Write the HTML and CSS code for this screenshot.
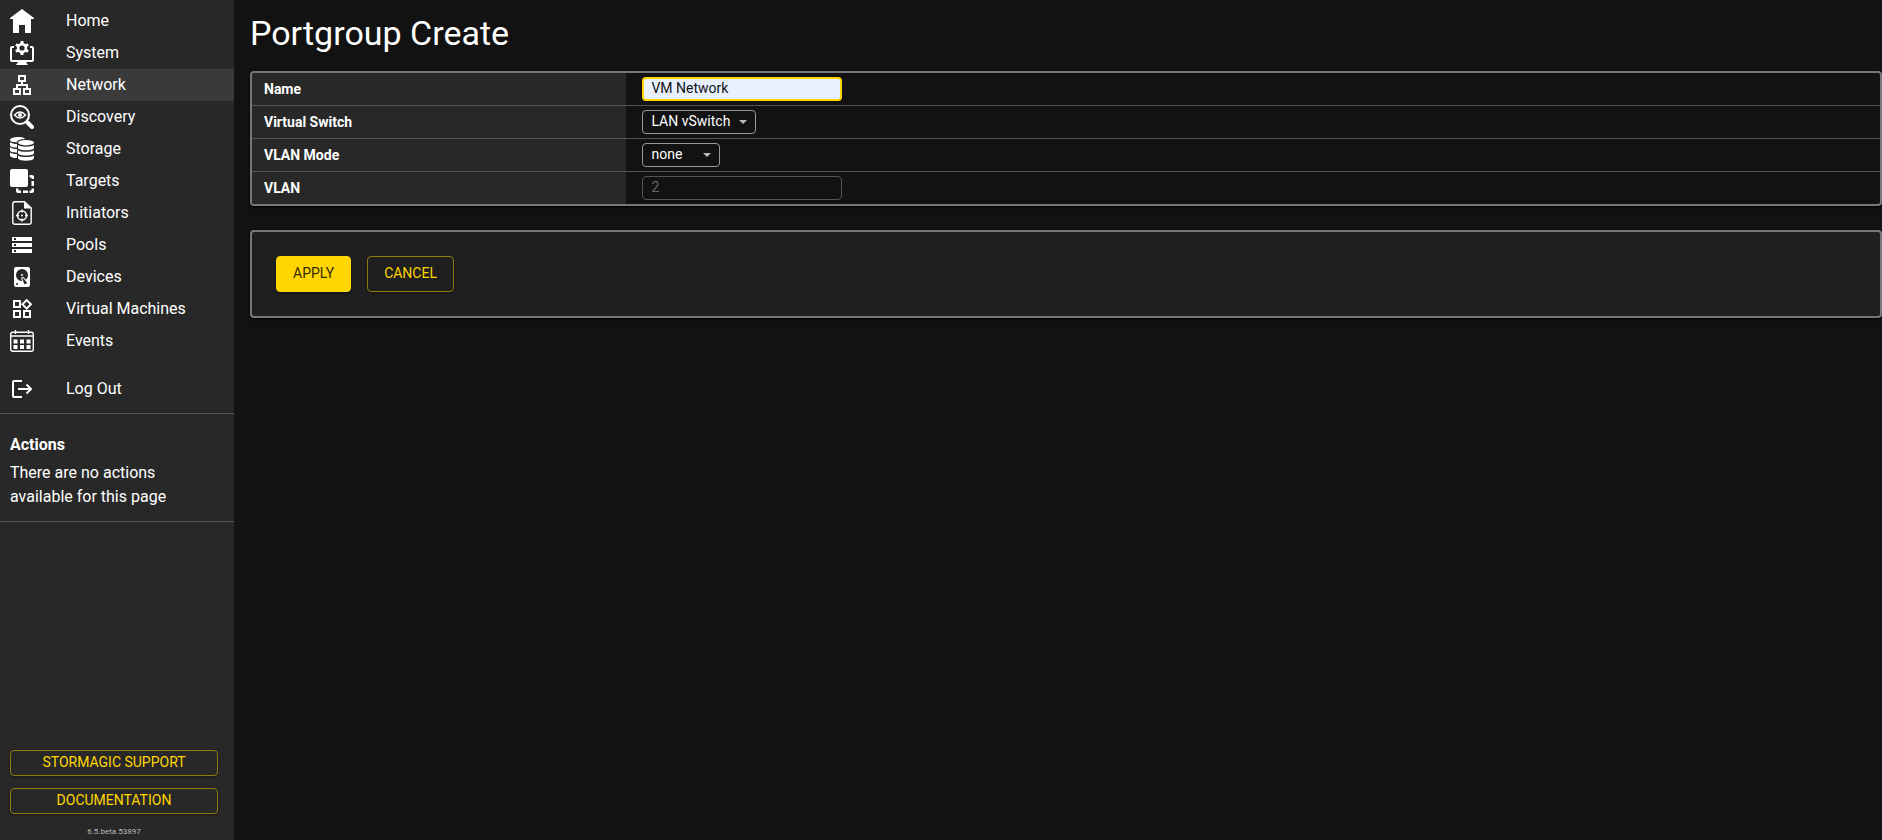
FILE: index.html
```
<!DOCTYPE html>
<html lang="en">
<head>
  <meta charset="utf-8">
  <title>Portgroup Create</title>
  <link rel="stylesheet" href="styles.css">
</head>
<body>
  <div class="sidebar">
    <nav class="menu">
      <a class="menu-item" href="#">
        <svg class="icon" viewBox="0 0 24 24"><path d="M12 0L24 9V10H21V24H15V16H9V24H3V10H0V9Z"/></svg>
        <span>Home</span>
      </a>
      <a class="menu-item" href="#">
        <svg class="icon" viewBox="0 0 24 24">
          <path class="line" d="M4 6H2Q1 6 1 7V19Q1 20 2 20H22Q23 20 23 19V7Q23 6 22 6H20"/>
          <path d="M8 21H16L18 24H6Z"/>
          <circle class="gear" cx="12" cy="7" r="3.9"/>
          <path class="teeth" d="M12 0V3M12 11V14M5.9 3.5L8.5 5M15.5 9L18.1 10.5M5.9 10.5L8.5 9M15.5 5L18.1 3.5"/>
        </svg>
        <span>System</span>
      </a>
      <a class="menu-item active" href="#">
        <svg class="icon" viewBox="0 0 24 24">
          <path class="line" d="M9 3H15V8H9ZM4 16H10V21H4ZM14 16H20V21H14ZM12 8V12M7 16V12H17V16"/>
        </svg>
        <span>Network</span>
      </a>
      <a class="menu-item" href="#">
        <svg class="icon" viewBox="0 0 24 24">
          <circle class="line" cx="10" cy="10" r="9"/>
          <path class="handle" d="M17.5 17.5L22 22"/>
          <path class="thin" d="M4.5 10Q10 4 15.5 10Q10 16 4.5 10Z"/>
          <circle cx="10" cy="10" r="2"/>
        </svg>
        <span>Discovery</span>
      </a>
      <a class="menu-item" href="#">
        <svg class="icon" viewBox="0 0 24 24">
          <path d="M0 3C0 -0.6 14 -0.8 15 2C10 2.2 7 3.5 7 5.4C3 5.4 0 4.6 0 3Z"/>
          <path d="M0 5.2C2 6.6 4.5 6.9 7 6.9V10.6C3 10.6 0 9.6 0 8.2ZM0 10.3C2 11.7 4.5 12 7 12V15.7C3 15.7 0 14.7 0 13.3ZM0 15.4C2 16.8 4.5 17.1 7 17.1V21C3 21 0 19.8 0 18.4Z"/>
          <ellipse cx="16" cy="5.7" rx="8" ry="2.7"/>
          <path d="M8 8C11 10.2 21 10.2 24 8V11.3C22 14 10 14 8 11.3ZM8 13.2C11 15.3 21 15.3 24 13.2V16.5C22 19.2 10 19.2 8 16.5ZM8 18.4C11 20.5 21 20.5 24 18.4V21.5C22 24.5 10 24.5 8 21.5Z"/>
        </svg>
        <span>Storage</span>
      </a>
      <a class="menu-item" href="#">
        <svg class="icon" viewBox="0 0 24 24">
          <rect width="18" height="18" rx="2"/>
          <path d="M19.5 6H22Q24 6 24 8V10H21.5V8.5H19.5ZM21.5 12H24V17H21.5ZM21.5 19.5H24V22Q24 24 22 24H19.5V21.5H21.5ZM13 21.5H18V24H13ZM6 19.5H8.5V21.5H11V24H8Q6 24 6 22Z"/>
        </svg>
        <span>Targets</span>
      </a>
      <a class="menu-item" href="#">
        <svg class="icon" viewBox="0 0 24 24">
          <path class="thin" d="M5 0.8H14.5L21.2 7V21Q21.2 23.2 19 23.2H5Q2.8 23.2 2.8 21V3Q2.8 0.8 5 0.8Z"/>
          <path d="M14 1V7.5H21Z"/>
          <circle class="thin" cx="12" cy="14.5" r="4.5"/>
          <circle cx="12" cy="14.5" r="1"/>
          <path class="thin" d="M12 8.5V11.5M12 17.5V20.5M6 14.5H9M15 14.5H18"/>
        </svg>
        <span>Initiators</span>
      </a>
      <a class="menu-item" href="#">
        <svg class="icon" viewBox="0 0 24 24"><path d="M2 20h20v-4H2v4zm2-3h2v2H4v-2zM2 4v4h20V4H2zm4 3H4V5h2v2zm-4 7h20v-4H2v4zm2-3h2v2H4v-2z"/></svg>
        <span>Pools</span>
      </a>
      <a class="menu-item" href="#">
        <svg class="icon" viewBox="0 0 24 24"><path d="M6 2H18A2 2 0 0 1 20 4V20A2 2 0 0 1 18 22H6A2 2 0 0 1 4 20V4A2 2 0 0 1 6 2M12 4A6 6 0 0 0 6 10C6 13.31 8.69 16 12.1 16L11.22 13.77C10.95 13.29 11.11 12.68 11.59 12.4L12.45 11.9C12.93 11.63 13.54 11.79 13.82 12.27L15.74 14.69C17.12 13.59 18 11.9 18 10A6 6 0 0 0 12 4M12 9A1 1 0 0 1 13 10A1 1 0 0 1 12 11A1 1 0 0 1 11 10A1 1 0 0 1 12 9M7 18A1 1 0 0 0 6 19A1 1 0 0 0 7 20A1 1 0 0 0 8 19A1 1 0 0 0 7 18M12.09 13.27L14.58 19.58L17.17 18.08L12.95 12.77Z"/></svg>
        <span>Devices</span>
      </a>
      <a class="menu-item" href="#">
        <svg class="icon" viewBox="0 0 24 24"><path d="M16.66 4.52l2.83 2.83-2.83 2.83-2.83-2.83 2.83-2.83M9 5v4H5V5h4m10 10v4h-4v-4h4M9 15v4H5v-4h4m7.66-13.31L11 7.34 16.66 13l5.66-5.66-5.66-5.65zM11 3H3v8h8V3zm10 10h-8v8h8v-8zm-10 0H3v8h8v-8z"/></svg>
        <span>Virtual Machines</span>
      </a>
      <a class="menu-item" href="#">
        <svg class="icon" viewBox="0 0 24 24">
          <rect class="thin" x="0.7" y="3.2" width="22.6" height="19.1" rx="2"/>
          <path class="thin" d="M1 7H23M5.5 1V5M18.5 1V5"/>
          <path d="M3.5 10.5H7.5V14.5H3.5ZM10 10.5H14V14.5H10ZM16.5 10.5H20.5V14.5H16.5ZM3.5 16H7.5V20H3.5ZM10 16H14V20H10ZM16.5 16H20.5V20H16.5Z"/>
        </svg>
        <span>Events</span>
      </a>
      <a class="menu-item logout" href="#">
        <svg class="icon" viewBox="0 0 24 24"><path class="line" d="M12 4H4Q3 4 3 5V19Q3 20 4 20H12M8 12H21M16.5 7.5L21 12L16.5 16.5"/></svg>
        <span>Log Out</span>
      </a>
    </nav>

    <div class="actions">
      <h2>Actions</h2>
      <p>There are no actions available for this page</p>
    </div>

    <div class="sidebar-footer">
      <button class="btn btn-small" type="button">STORMAGIC SUPPORT</button>
      <button class="btn btn-small" type="button">DOCUMENTATION</button>
      <p class="version">6.5.beta.53897</p>
    </div>
  </div>

  <main class="content">
    <h1>Portgroup Create</h1>
    <form>
      <table class="settings">
        <tr>
          <th><label for="name">Name</label></th>
          <td><input class="field name-field" id="name" type="text" value="VM Network"></td>
        </tr>
        <tr>
          <th><label for="vswitch">Virtual Switch</label></th>
          <td>
            <select class="field select-switch" id="vswitch">
              <option>LAN vSwitch</option>
            </select>
          </td>
        </tr>
        <tr>
          <th><label for="vlanmode">VLAN Mode</label></th>
          <td>
            <select class="field select-mode" id="vlanmode">
              <option>none</option>
            </select>
          </td>
        </tr>
        <tr>
          <th><label for="vlan">VLAN</label></th>
          <td><input class="field" id="vlan" type="text" value="2" disabled></td>
        </tr>
      </table>

      <div class="buttons">
        <button class="btn btn-primary" type="button">APPLY</button>
        <button class="btn" type="button">CANCEL</button>
      </div>
    </form>
  </main>
</body>
</html>
```

FILE: styles.css
```
* {
  box-sizing: border-box;
}

body {
  display: flex;
  min-height: 100vh;
  margin: 0;
  background-color: #121212;
  color: #fff;
  font-family: Roboto, sans-serif;
  font-size: 16px;
  line-height: 24px;
}

.sidebar {
  display: flex;
  flex-direction: column;
  flex-shrink: 0;
  width: 234px;
  background-color: #282828;
}

.menu {
  padding: 5px 0 8px;
  border-bottom: 1px solid #555;
}

.menu-item {
  display: flex;
  align-items: center;
  gap: 32px;
  height: 32px;
  padding: 0 10px;
  color: #fff;
  text-decoration: none;
}

.menu-item:hover,
.menu-item.active {
  background-color: #3a3a3a;
}

.logout {
  margin-top: 16px;
}

.icon {
  width: 24px;
  height: 24px;
  fill: #fff;
}

.icon .line,
.icon .thin,
.icon .gear,
.icon .teeth,
.icon .handle {
  fill: none;
  stroke: #fff;
  stroke-width: 2;
}

.icon .thin {
  stroke-width: 1.4;
}

.icon .gear {
  stroke-width: 2.6;
}

.icon .teeth {
  stroke-width: 3;
}

.icon .handle {
  stroke-width: 4;
  stroke-linecap: round;
}

.actions {
  padding: 19px 40px 12px 10px;
  border-bottom: 1px solid #555;
}

.actions h2 {
  margin: 0 0 4px;
  font-size: 16px;
  font-weight: bold;
  line-height: 24px;
}

.actions p {
  margin: 0;
}

.sidebar-footer {
  display: flex;
  flex-direction: column;
  gap: 12px;
  margin-top: auto;
  padding: 0 16px 2px 10px;
}

.version {
  margin: 0;
  color: #bbb;
  font-size: 8px;
  line-height: 12px;
  text-align: center;
}

.content {
  flex-grow: 1;
  padding-left: 16px;
}

h1 {
  margin: 13px 0 18px;
  font-size: 34px;
  font-weight: 400;
  line-height: 40px;
}

.settings,
.buttons {
  border: 2px solid #777;
  border-radius: 4px;
  box-shadow: 0 1px 3px #000;
}

.settings {
  width: 100%;
  border-spacing: 0;
  overflow: hidden;
  font-size: 14px;
}

.settings th,
.settings td {
  height: 33px;
  padding: 0 16px;
  border-bottom: 1px solid #555;
  text-align: left;
}

.settings th {
  width: 23%;
  padding: 0 12px 1px;
  background-color: #282828;
}

.settings tr:last-child th,
.settings tr:last-child td {
  height: 32px;
  border-bottom: none;
}

.field {
  display: block;
  width: 200px;
  height: 24px;
  padding: 0 8px 2px;
  border: 1px solid #999;
  border-radius: 4px;
  background-color: #121212;
  color: #fff;
  font-family: inherit;
  font-size: 14px;
}

.field:focus {
  outline: none;
}

.field:disabled {
  border-color: #555;
  color: #666;
}

.name-field {
  padding: 0 7px 2px;
  border: 2px solid #ffd600;
  background-color: #e8f0fe;
  color: #121212;
}

select.field {
  appearance: none;
  background-image: url("data:image/svg+xml,%3Csvg xmlns='http://www.w3.org/2000/svg' viewBox='0 0 8 4'%3E%3Cpath d='M0 0H8L4 4Z' fill='%23bbb'/%3E%3C/svg%3E");
  background-position: right 8px center;
  background-repeat: no-repeat;
  background-size: 8px 4px;
}

.select-switch {
  width: 114px;
}

.select-mode {
  width: 78px;
}

.buttons {
  display: flex;
  gap: 16px;
  margin-top: 24px;
  padding: 24px;
  background-color: #1f1f1f;
}

.btn {
  height: 36px;
  padding: 0 16px 2px;
  border: 1px solid #8f7a0e;
  border-radius: 4px;
  background-color: transparent;
  box-shadow: 0 1px 3px rgba(0, 0, 0, 0.4);
  color: #ffd600;
  cursor: pointer;
  font-family: inherit;
  font-size: 14px;
}

.btn-primary {
  border-color: #ffd600;
  background-color: #ffd600;
  color: #332b00;
}

.btn-small {
  height: 26px;
}
```
